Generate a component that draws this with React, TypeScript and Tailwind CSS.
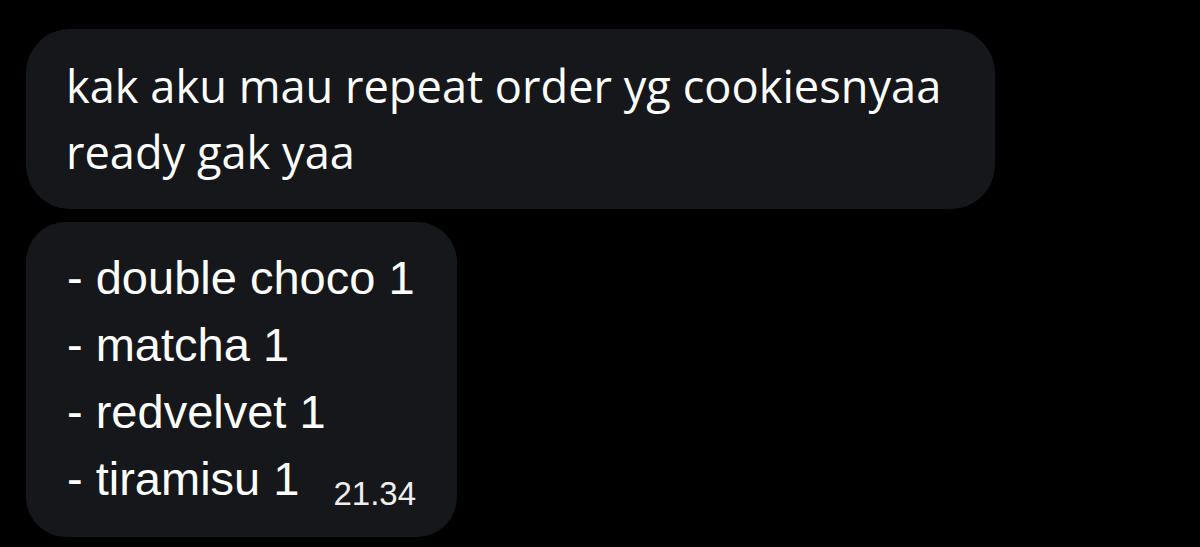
import React from 'react';

const items = ['- double choco 1', '- matcha 1', '- redvelvet 1'];

const App = () => {
  return (
    <div className="w-[1200px] h-[547px] bg-black overflow-hidden pt-[29px] pl-[26px]">
      <div className="w-[969px] h-[180px] bg-[#16171a] rounded-[44px] pl-[40px] pt-[24px] text-white text-[45.2px] leading-[66px] font-['Open_Sans',sans-serif]">
        kak aku mau repeat order yg cookiesnyaa
        <br />
        ready gak yaa
      </div>
      <div className="mt-[13px] w-[431px] h-[315px] bg-[#16171a] rounded-[40px] pl-[41px] pt-[22px] text-white font-['Liberation_Sans',sans-serif]">
        {items.map(t => (
          <div key={t} className="text-[47px] leading-[67px]">{t}</div>
        ))}
        <div className="flex items-baseline">
          <span className="text-[47px] leading-[67px]">- tiramisu 1</span>
          <span className="ml-[34px] text-[33px] text-[#eeeeee] relative top-[10px]">21.34</span>
        </div>
      </div>
    </div>
  );
};

export default App;
